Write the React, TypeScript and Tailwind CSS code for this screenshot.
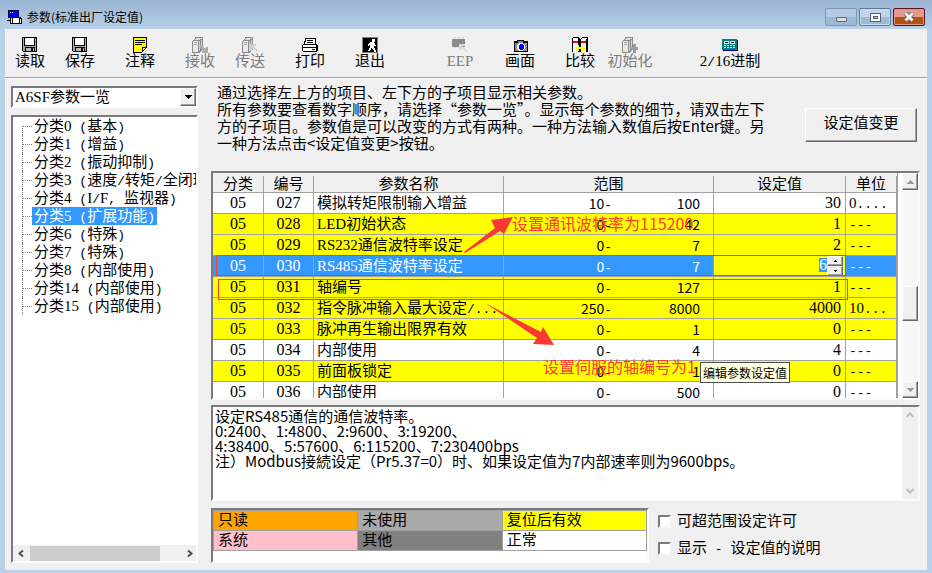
import type { ReactNode } from 'react'
import { clsx } from 'clsx'

const SUNKEN =
  'border-2 border-t-[#7a7a7a] border-l-[#7a7a7a] border-r-[#fcfcfc] border-b-[#fcfcfc]'
const RAISED =
  'border border-t-white border-l-white border-r-[#696969] border-b-[#696969] bg-[#f0f0f0] shadow-[inset_-1px_-1px_0_#a0a0a0]'

/* Punctuation and spaces take a fixed-width cell next to the ideographs */
function Mixed({ children }: { children: string }) {
  return (
    <>
      {children.split(/([\s()/,.<>-]+)/).map((part, i) =>
        i % 2 ? (
          <span key={i} className="font-['Liberation_Mono',monospace] text-[13px] leading-none">
            {part}
          </span>
        ) : (
          part
        ),
      )}
    </>
  )
}

function Icon({ children }: { children: ReactNode }) {
  return (
    <svg className="h-4 w-4" viewBox="0 0 16 16" shapeRendering="crispEdges" aria-hidden="true">
      {children}
    </svg>
  )
}

function FloppyIcon() {
  return (
    <Icon>
      <path d="M0 0h15v15H1v-1H0z" fill="#000" />
      <path d="M1 1h1v8h11V1h1v13H1z" fill="#aaa" />
      <path d="M2 0h11v9H2z" fill="#000" />
      <path d="M3 1h9v7H3z" fill="#fff" />
      <path d="M3 10h10v5H3z" fill="#000" />
      <path d="M4 11h8v3H4z" fill="#bbb" />
      <path d="M9 11h2v3H9z" fill="#000" />
    </Icon>
  )
}

function NoteIcon() {
  return (
    <Icon>
      <path d="M1 0h14v11h-1v1h-1v1h-1v1h-1v1h-1v1H1z" fill="#000" />
      <path d="M2 1h12v9h-4v5H2z" fill="#ff0" />
      <path d="M11 11h2v1h-1v1h-1z" fill="#ff0" />
      <path d="M3 3h10v1H3zM3 5h10v1H3zM3 7h7v1H3z" fill="#000" />
    </Icon>
  )
}

function ServoIcon({ mark }: { mark: 'receive' | 'send' | 'init' }) {
  return (
    <Icon>
      <path d="M0 4h1V3h1V2h1V0h8v13h-1v1H9v1H8v1H0z" fill="#8c8c8c" />
      <path d="M1 4h5v11H1z" fill="#e8e8e8" />
      <path d="M2 5h3v1H2zM2 7h3v1H2z" fill="#a0a0a0" />
      <path d="M4 1h6v1H4zM3 2h5v1H3z" fill="#dcdcdc" />
      <path d="M7 4h1v10H7zM9 3h1v9H9z" fill="#d0d0d0" />
      {mark === 'receive' && (
        <path d="M8 8h2v1h1v1h1v1h2v-1h2v6h-6v-2h1v-1h-1v-1H9v-1H8z" fill="#a9afaf" />
      )}
      {mark === 'send' && (
        <path d="M8 7h6v2h-2v1h1v1h1v1h1v1h1v1h-2v-1h-1v-1h-1v-1h-1v1h-1v2H8z" fill="#ccd3d3" />
      )}
      {mark === 'init' && <path d="M11 7h3v3h2v3h-2v3h-3v-3H8v-3h3z" fill="#9c9c9c" />}
    </Icon>
  )
}

function PrinterIcon() {
  return (
    <Icon>
      <path d="M3 1h11v6h1v1h1v6h-1v1H1v-1H0V8h1V7h1V4h1z" fill="#000" />
      <path d="M4 2h9v5H3V5h1z" fill="#fff" />
      <path d="M5 3h6v1H5zM5 5h6v1H5z" fill="#000" />
      <path d="M1 8h13v2H1zM1 11h13v3H1z" fill="#fff" />
      <path d="M10 12h3v1h-3z" fill="#000" />
    </Icon>
  )
}

function ExitIcon() {
  return (
    <Icon>
      <path d="M0 0h16v16H0z" fill="#808080" />
      <path d="M1 1h14v14H1z" fill="#000" />
      <path
        d="M10 2h3v3h-1v1h1v2h1v1h-2v2h1v2h1v2h-2v-2h-1v-1h-1v-1H9v2H8v1H6v-1h1v-2h1V8H7v1H6V7h1V6h1V5h2z"
        fill="#fff"
      />
    </Icon>
  )
}

function EepIcon() {
  return (
    <Icon>
      <path d="M2 0h2v2H2zM6 0h2v2H6zM10 0h2v2h-2zM2 9h2v2H2zM6 9h2v2H6z" fill="#dcdcdc" />
      <path d="M0 2h13v8H0z" fill="#8c8c8c" />
      <path d="M7 7h6v2h-2v1h1v1h1v1h1v1h1v1h1v1h-2v-1h-1v-1h-1v-1h-1v-1h-1v2H7z" fill="#d5dada" />
    </Icon>
  )
}

function CameraIcon() {
  return (
    <Icon>
      <path d="M5 3h7v1h4v11H2V4h3z" fill="#000" />
      <path d="M6 4h5v2h4v8H3V6h3z" fill="#909090" />
      <path d="M7 6h4v1h1v1h1v4h-1v1h-1v1H7v-1H6v-1H5V8h1V7h1z" fill="#fff" />
      <path d="M8 7h3v1h1v4h-1v1H8v-1H7V8h1z" fill="#0000f0" />
    </Icon>
  )
}

function CompareIcon() {
  return (
    <Icon>
      <path d="M1 0h6v1h1v1h1V1h1V0h6v15H0V1h1z" fill="#000" />
      <path d="M1 2h5v13H1zM9 2h5v13H9z" fill="#fff" />
      <path d="M1 1h5v1H1zM10 1h5v1h-5z" fill="#fff" />
      <path d="M1 4h5v2H1zM9 4h5v2H9z" fill="#f00" />
      <path d="M4 10h2V8h1v2h3V8h1v1h1v1h1v2h-1v1h-1v1h-1v-2H7v2H6v-1H4v-1H3v-2h1z" fill="#ff0" />
    </Icon>
  )
}

function RadixIcon() {
  return (
    <Icon>
      <path d="M1 3h15v11H1z" fill="#000080" />
      <path d="M0 2h15v11H0z" fill="#008080" />
      <path d="M2 4h5v3H2zM8 4h5v3H8z" fill="#fff" />
      <path d="M3 5h3v1H3zM9 5h3v1H9z" fill="#000" />
      <path
        d="M2 8h2v1H2zM5 8h2v1H5zM8 8h2v1H8zM11 8h2v1h-2zM2 10h2v1H2zM5 10h2v1H5zM8 10h2v1H8zM11 10h2v1h-2z"
        fill="#d8f4f4"
      />
    </Icon>
  )
}

interface ToolProps {
  label: string
  icon: ReactNode
  disabled?: boolean
  className?: string
}

function Tool({ label, icon, disabled, className }: ToolProps) {
  return (
    <button
      type="button"
      disabled={disabled}
      className={clsx(
        'flex w-[50px] shrink-0 flex-col items-center whitespace-nowrap leading-4',
        disabled && 'text-[#7c7c7c]',
        className,
      )}
    >
      {icon}
      <span>
        <Mixed>{label}</Mixed>
      </span>
    </button>
  )
}

function TitleBar() {
  return (
    <header className="flex h-[29px] items-start justify-between bg-linear-to-b from-[#98b3d0] to-[#b9d1ea] pr-[7px] pl-[7px]">
      <div className="flex items-center gap-1 pt-2">
        <svg className="h-4 w-4" viewBox="0 0 16 16" shapeRendering="crispEdges" aria-hidden="true">
          <path d="M1 1h11v8H1z" fill="#000060" />
          <path d="M2 2h9v6H2z" fill="#0000f0" />
          <path d="M3 3h1v1H3zM5 3h1v1H5z" fill="#fff" />
          <path d="M3 8h11v1h1v6H3v-3H0v-1h3z" fill="#000" />
          <path d="M4 9h1v5H4zM6 9h6v5H6zM13 10h1v4h-1z" fill="#fff" />
        </svg>
        <h1 className="font-['Noto_Sans_CJK_SC',sans-serif] text-xs leading-[18px]">
          参数(标准出厂设定值)
        </h1>
      </div>
      <div className="flex gap-[2px] pt-2">
        <button
          type="button"
          aria-label="最小化"
          className="flex h-[18px] w-8 items-center justify-center rounded-[2px] border border-[#8098b4] bg-linear-to-b from-[#b4cae2] from-50% to-[#9db8d6] to-50%"
        >
          <span className="mt-1 h-[5px] w-[11px] rounded-[1px] border border-[#606870] bg-[#dcdcdc]" />
        </button>
        <button
          type="button"
          aria-label="最大化"
          className="flex h-[18px] w-8 items-center justify-center rounded-[2px] border border-[#5f7895] bg-linear-to-b from-[#c0d5ec] from-50% to-[#9db9d8] to-50% shadow-[inset_0_0_0_1px_#c8dcf0]"
        >
          <svg className="h-[9px] w-[11px]" viewBox="0 0 11 9" shapeRendering="crispEdges">
            <path d="M0 0h11v9H0z" fill="#59616b" />
            <path d="M1 1h9v7H1z" fill="#f4f4f4" />
            <path d="M3 3h5v3H3z" fill="#59616b" />
            <path d="M4 4h3v1H4z" fill="#9db9d8" />
          </svg>
        </button>
        <button
          type="button"
          aria-label="关闭"
          className="flex h-[18px] w-8 items-center justify-center rounded-[2px] border border-[#5a1420] bg-linear-to-b from-[#e39c8c] from-50% to-[#b7500f] to-50% shadow-[inset_0_0_0_1px_#dc9a8c]"
        >
          <svg className="h-[10px] w-3" viewBox="0 0 12 10">
            <path d="M2.5 1.5l7 7M9.5 1.5l-7 7" stroke="#5c6470" strokeWidth="4.6" />
            <path d="M2.5 1.5l7 7M9.5 1.5l-7 7" stroke="#fafafa" strokeWidth="2.8" />
          </svg>
        </button>
      </div>
    </header>
  )
}

function Toolbar() {
  return (
    <nav className="flex h-[50px] items-start border-b border-white pt-2 shadow-[inset_0_-1px_0_#a0a0a0]">
      <Tool label="读取" icon={<FloppyIcon />} />
      <Tool label="保存" icon={<FloppyIcon />} />
      <Tool label="注释" icon={<NoteIcon />} className="ml-[10px]" />
      <Tool label="接收" icon={<ServoIcon mark="receive" />} disabled className="ml-[10px]" />
      <Tool label="传送" icon={<ServoIcon mark="send" />} disabled />
      <Tool label="打印" icon={<PrinterIcon />} className="ml-[10px]" />
      <Tool label="退出" icon={<ExitIcon />} className="ml-[10px]" />
      <Tool label="EEP" icon={<EepIcon />} disabled className="ml-10" />
      <Tool label="画面" icon={<CameraIcon />} className="ml-[10px]" />
      <Tool label="比较" icon={<CompareIcon />} className="ml-[10px]" />
      <Tool label="初始化" icon={<ServoIcon mark="init" />} disabled />
      <Tool label="2/16进制" icon={<RadixIcon />} className="ml-[50px]" />
    </nav>
  )
}

const categories = [
  '分类0 (基本)',
  '分类1 (增益)',
  '分类2 (振动抑制)',
  '分类3 (速度/转矩/全闭环)',
  '分类4 (I/F, 监视器)',
  '分类5 (扩展功能)',
  '分类6 (特殊)',
  '分类7 (特殊)',
  '分类8 (内部使用)',
  '分类14 (内部使用)',
  '分类15 (内部使用)',
]

function Sidebar() {
  return (
    <aside className="flex w-[187px] shrink-0 flex-col gap-[7px] pt-[7px]">
      <div className="relative">
        <select
          aria-label="参数一览"
          className={clsx('block h-[22px] w-full appearance-none bg-white pl-[2px] leading-[18px]', SUNKEN)}
        >
          <option>A6SF参数一览</option>
        </select>
        <span
          className={clsx(
            'pointer-events-none absolute top-[2px] right-[2px] flex h-[18px] w-4 items-center justify-center',
            RAISED,
          )}
        >
          <svg className="h-1 w-[7px]" viewBox="0 0 7 4" shapeRendering="crispEdges">
            <path d="M0 0h7v1H6v1H5v1H4v1H3V3H2V2H1V1H0z" fill="#000" />
          </svg>
        </span>
      </div>

      <div className={clsx('flex flex-1 flex-col overflow-hidden bg-white', SUNKEN)}>
        <ul className="flex-1">
          {categories.map((name, i) => (
            <li key={name} className="flex h-[18px] items-center whitespace-nowrap pl-[9px]">
              <span
                className={clsx(
                  'flex shrink-0 border-l border-dotted border-[#808080]',
                  i === 0 ? 'h-[9px] items-start self-end' : 'h-[18px]',
                  i === categories.length - 1 && 'h-[10px] self-start',
                )}
              >
                <span
                  className={clsx(
                    'w-[9px] border-t border-dotted border-[#808080]',
                    i !== 0 && 'mt-[9px]',
                  )}
                />
              </span>
              <a
                href="#"
                className={clsx('h-[18px] px-[2px] leading-[18px]', i === 5 && 'bg-[#3399ff] text-white')}
              >
                <Mixed>{name}</Mixed>
              </a>
            </li>
          ))}
        </ul>
        <div className="flex h-4 items-center bg-[#f0f0f0] pr-[3px] pl-[5px] text-[#505050]">
          <svg className="h-[7px] w-[6px]" viewBox="0 0 6 7">
            <path d="M5 0.5L1.5 3.5L5 6.5" fill="none" stroke="currentColor" strokeWidth="2" />
          </svg>
          <div className="mx-[6px] flex-1">
            <div className="h-[15px] w-[86%] bg-[#cdcdcd]" />
          </div>
          <svg className="h-[7px] w-[6px]" viewBox="0 0 6 7">
            <path d="M1 0.5L4.5 3.5L1 6.5" fill="none" stroke="currentColor" strokeWidth="2" />
          </svg>
        </div>
      </div>
    </aside>
  )
}

interface Param {
  no: string
  name: string
  min: string
  max: string
  value: string
  unit: string
  reset?: boolean
}

const params: Param[] = [
  { no: '027', name: '模拟转矩限制输入增益', min: '10', max: '100', value: '30', unit: '0....' },
  { no: '028', name: 'LED初始状态', min: '0', max: '42', value: '1', unit: '---', reset: true },
  { no: '029', name: 'RS232通信波特率设定', min: '0', max: '7', value: '2', unit: '---', reset: true },
  { no: '030', name: 'RS485通信波特率设定', min: '0', max: '7', value: '6', unit: '---', reset: true },
  { no: '031', name: '轴编号', min: '0', max: '127', value: '1', unit: '---', reset: true },
  { no: '032', name: '指令脉冲输入最大设定/...', min: '250', max: '8000', value: '4000', unit: '10...', reset: true },
  { no: '033', name: '脉冲再生输出限界有效', min: '0', max: '1', value: '0', unit: '---', reset: true },
  { no: '034', name: '内部使用', min: '0', max: '4', value: '4', unit: '---' },
  { no: '035', name: '前面板锁定', min: '0', max: '1', value: '0', unit: '---', reset: true },
  { no: '036', name: '内部使用', min: '0', max: '500', value: '0', unit: '---' },
]

const CELL = 'h-[21px] border-r border-b border-[#a0a0a0] p-0 leading-5 whitespace-nowrap overflow-hidden'

function ValueSpinner({ value }: { value: string }) {
  return (
    <div className="flex h-5 items-start justify-end pr-[2px]">
      <input
        aria-label="设定值"
        defaultValue={value}
        className="mt-[2px] h-[14px] w-2 bg-[#3399ff] text-base leading-[14px] text-white outline-none"
      />
      <div className="flex flex-col">
        {['M2 0h1v1h1v1H1V1h1z', 'M1 0h3v1H3v1H2V1H1z'].map((d, i) => (
          <button
            key={d}
            type="button"
            aria-label={i ? '减小' : '增大'}
            className={clsx('flex h-[10px] w-4 items-center justify-center', RAISED)}
          >
            <svg className="h-[2px] w-[5px]" viewBox="0 0 5 2" shapeRendering="crispEdges">
              <path d={d} fill="#000" />
            </svg>
          </button>
        ))}
      </div>
    </div>
  )
}

function ScrollButton({ up }: { up?: boolean }) {
  return (
    <button
      type="button"
      aria-label={up ? '向上滚动' : '向下滚动'}
      className={clsx('flex h-[17px] w-full items-center justify-center', RAISED)}
    >
      <svg className="h-1 w-[7px]" viewBox="0 0 7 4" shapeRendering="crispEdges">
        <path
          d={up ? 'M3 0h1v1h1v1h1v1h1v1H0V3h1V2h1V1h1z' : 'M0 0h7v1H6v1H5v1H4v1H3V3H2V2H1V1H0z'}
          fill="#9a9a9a"
        />
      </svg>
    </button>
  )
}

function ParamTable() {
  return (
    <section className="relative">
      <div className={clsx('flex h-[229px] overflow-hidden bg-white', SUNKEN)}>
        <div className="mr-1 flex-1 overflow-hidden">
          <table className="w-full table-fixed border-separate border-spacing-0 border-r border-[#a0a0a0]">
            <colgroup>
              <col className="w-[51px]" />
              <col className="w-[50px]" />
              <col />
              <col className="w-[210px]" />
              <col className="w-[132px]" />
              <col className="w-[51px]" />
            </colgroup>
            <thead>
              <tr className="bg-[#f0f0f0]">
                {['分类', '编号', '参数名称', '范围', '设定值', '单位'].map((title) => (
                  <th key={title} className="h-5 border-b border-[#a0a0a0] p-0 font-normal">
                    <div className="mt-[2px] border-r border-[#a0a0a0] leading-4">{title}</div>
                  </th>
                ))}
              </tr>
            </thead>
            <tbody>
              {params.map((p) => {
                const active = p.no === '030'
                return (
                  <tr
                    key={p.no}
                    className={clsx(
                      active ? 'bg-[#3399ff] text-white' : p.reset ? 'bg-[#ffff00]' : 'bg-white',
                    )}
                  >
                    <td className={clsx(CELL, 'text-center text-base')}>05</td>
                    <td className={clsx(CELL, 'text-center text-base')}>{p.no}</td>
                    <td className={clsx(CELL, 'pl-[3px]')}>
                      <Mixed>{p.name}</Mixed>
                    </td>
                    <td className={clsx(CELL, "font-['Noto_Sans_CJK_SC',sans-serif] text-sm")}>
                      <div className="flex h-5 text-right leading-5">
                        <span className="w-[108px]">
                          <Mixed>{`${p.min}-`}</Mixed>
                        </span>
                        <span className="flex-1 pr-[13px]">{p.max}</span>
                      </div>
                    </td>
                    <td className={clsx(CELL, 'text-right text-base', active && 'bg-[#ffff00]')}>
                      {active ? <ValueSpinner value={p.value} /> : <span className="pr-1">{p.value}</span>}
                    </td>
                    <td className={clsx(CELL, 'pl-[3px]')}>
                      <Mixed>{p.unit}</Mixed>
                    </td>
                  </tr>
                )
              })}
            </tbody>
          </table>
        </div>
        <div className="flex w-4 flex-col bg-[#f7f7f7]">
          <ScrollButton up />
          <div className="flex-1 pt-24">
            <div className={clsx('h-[35px]', RAISED)} />
          </div>
          <ScrollButton />
        </div>
      </div>

      {/* Notes drawn over the grid */}
      <svg className="pointer-events-none absolute inset-0 h-full w-full">
        <g fill="none" stroke="#ff3b30" shapeRendering="crispEdges">
          <rect x="5" y="84" width="629" height="20" />
          <rect x="7" y="108" width="629" height="20" />
        </g>
        <g fill="#fb3838">
          <path d="M253 81L284 57L280 49L302 46L293 63L289 60L254 82Z" />
          <path d="M274 132L330 161L332 156L343 174L322 173L326 167Z" />
        </g>
      </svg>
      <p className="absolute top-[42px] left-[301px] font-['Noto_Sans_CJK_SC',sans-serif] text-base leading-5 whitespace-nowrap text-[#ff3b30]">
        设置通讯波特率为115200
      </p>
      <p className="absolute top-[185px] left-[332px] font-['Noto_Sans_CJK_SC',sans-serif] text-base leading-5 whitespace-nowrap text-[#ff3b30]">
        设置伺服的轴编号为1
      </p>
      <div
        role="tooltip"
        className="absolute top-[191px] left-[489px] border border-[#505050] bg-[#ffffe1] px-[2px] font-['Noto_Sans_CJK_SC',sans-serif] text-xs leading-[19px] whitespace-nowrap"
      >
        编辑参数设定值
      </div>
    </section>
  )
}

const detail = `设定RS485通信的通信波特率。
0:2400、1:4800、2:9600、3:19200、
4:38400、5:57600、6:115200、7:230400bps
注）Modbus接続设定（Pr5.37=0）时、如果设定值为7内部速率则为9600bps。`

function Detail() {
  return (
    <div className={clsx('mt-[5px] flex min-h-24 flex-1 bg-white', SUNKEN)}>
      <textarea
        readOnly
        aria-label="参数说明"
        value={detail}
        className="flex-1 resize-none overflow-hidden pt-px pl-[2px] font-['Noto_Sans_CJK_SC',sans-serif] leading-[15px] outline-none"
      />
      <div className="flex w-4 flex-col items-center justify-between bg-[#f0f0f0] py-[5px] text-[#bfbfbf]">
        <svg className="h-[6px] w-2" viewBox="0 0 8 6">
          <path d="M0.5 5L4 1.5L7.5 5" fill="none" stroke="currentColor" strokeWidth="2" />
        </svg>
        <svg className="h-[6px] w-2" viewBox="0 0 8 6">
          <path d="M0.5 1L4 4.5L7.5 1" fill="none" stroke="currentColor" strokeWidth="2" />
        </svg>
      </div>
    </div>
  )
}

function Legend() {
  const cell = 'h-5 w-1/3 border-r border-b border-[#a0a0a0] p-0 pl-1 leading-[19px]'
  return (
    <div className={clsx('h-[55px] w-[438px] shrink-0 bg-white', SUNKEN)}>
      <table className="w-full table-fixed border-separate border-spacing-0 border-t border-l border-[#a0a0a0]">
        <tbody>
          <tr>
            <td className={clsx(cell, 'bg-[#ffa500]')}>只读</td>
            <td className={clsx(cell, 'bg-[#a9a9a9]')}>未使用</td>
            <td className={clsx(cell, 'bg-[#ffff00]')}>复位后有效</td>
          </tr>
          <tr>
            <td className={clsx(cell, 'bg-[#ffc0cb]')}>系统</td>
            <td className={clsx(cell, 'bg-[#808080]')}>其他</td>
            <td className={clsx(cell, 'bg-white')}>正常</td>
          </tr>
        </tbody>
      </table>
    </div>
  )
}

function Check({ label }: { label: string }) {
  return (
    <label className="flex items-center gap-[6px] leading-[27px] whitespace-nowrap">
      <input
        type="checkbox"
        className="h-[13px] w-[13px] appearance-none border-2 border-t-[#7a7a7a] border-r-[#f8f8f8] border-b-[#f8f8f8] border-l-[#7a7a7a] bg-white checked:bg-[#3399ff]"
      />
      <span>
        <Mixed>{label}</Mixed>
      </span>
    </label>
  )
}

export default function App() {
  return (
    <div className="flex min-h-screen flex-col bg-[#b9d1ea] font-['Liberation_Serif','Noto_Sans_CJK_SC',serif] text-[15px] text-black">
      <TitleBar />
      <div className="mx-[5px] mb-[3px] flex flex-1 flex-col bg-[#f0f0f0]">
        <Toolbar />
        <main className="flex flex-1 gap-[13px] pr-[7px] pb-[7px] pl-[6px]">
          <Sidebar />
          <div className="flex min-w-0 flex-1 flex-col">
            <div className="flex h-[92px] items-start justify-between pt-1 pr-[3px] pl-[6px]">
              <p className="font-['Noto_Sans_CJK_SC',sans-serif] leading-[17px] whitespace-nowrap">
                通过选择左上方的项目、左下方的子项目显示相关参数。
                <br />
                所有参数要查看数字顺序，请选择“参数一览”。显示每个参数的细节，请双击左下
                <br />
                方的子项目。参数值是可以改变的方式有两种。一种方法输入数值后按Enter键。另
                <br />
                一种方法点击&lt;设定值变更&gt;按钮。
              </p>
              <button type="button" className={clsx('mt-[25px] h-[34px] w-28 shrink-0 pb-1', RAISED)}>
                设定值变更
              </button>
            </div>
            <ParamTable />
            <Detail />
            <div className="mt-[7px] flex gap-[9px]">
              <Legend />
              <div>
                <Check label="可超范围设定许可" />
                <Check label="显示 - 设定值的说明" />
              </div>
            </div>
          </div>
        </main>
      </div>
    </div>
  )
}
